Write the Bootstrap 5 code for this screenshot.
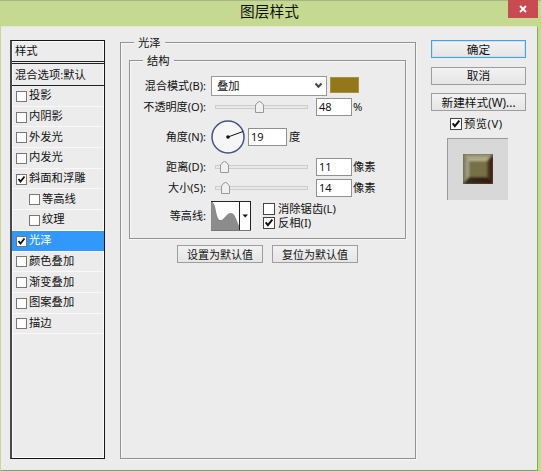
<!DOCTYPE html>
<html lang="zh-CN">
<head>
<meta charset="utf-8">
<title>图层样式</title>
<link href="https://cdn.jsdelivr.net/npm/bootstrap@5.3.0/dist/css/bootstrap.min.css" rel="stylesheet">
<style>
html,body{height:471px;overflow:hidden}
body{font:11.3px/14px "Noto Sans","Noto Sans CJK SC",sans-serif;color:#111;background:#c5d990;white-space:nowrap}
.dialog{width:541px;height:471px;border-top:1px solid #a5b58a}
.titlebar{height:25px;padding-right:2px;font-size:14.7px;line-height:21px}
.close-box{top:-1px;right:3px;width:30px;height:18px;background:#c84b51}
.content-area{width:537px;height:445px;margin-left:1px;padding:13px 0 0 9px;background:#ececec;border-top:1px solid #e1e9c8;border-right:1px solid #8fa653;border-bottom:1px solid #8b9a65}
.style-list{width:95px;height:419px;border:1px solid #161616;border-left:2px solid #484848;box-shadow:inset 1px 1px #fafafa,inset -1px -1px #fafafa;flex:none}
.list-head{height:21px;padding:3px 0 0 3px;border-bottom:1px solid #222}
.list-sub{height:23px;margin-top:1px;padding:4px 0 0 3px;border-top:1px solid #222;border-bottom:1px solid #222}
.style-row{height:20.7px;padding:0 0 1px 4px;border-bottom:1px solid #f9f9f9;gap:2px}
.style-row.child{padding-left:17px}
.style-row.active{background:#3298fb;color:#fff}
.style-row .tick{margin-top:2px}
.tick{width:11px;height:11px;border:1px solid #777;background:#fff;flex:none;display:block}
.tick.big{width:12px;height:12px;border-color:#444}
.tick svg{display:block;width:100%;height:100%}
.group{border:1px solid #929292;box-shadow:inset 1px 1px #f8f8f8,1px 1px #f6f6f6;position:relative}
.outer{width:296px;height:417px;margin:2px 0 0 15px;padding:17px 0 0 8px;flex:none}
.inner{width:277px;height:179px;padding-top:14px}
.group-title{position:absolute;top:-7px;left:13px;padding:0 4px;background:#ececec}
.field{display:flex;align-items:center}
.field-label{width:76px;text-align:right;margin-right:5px;flex:none;font-size:11.1px}
.combo{width:116px;height:20px;border:1px solid #999;background:#fff;padding:0 3px 0 5px}
.swatch{width:29px;height:16px;background:#937719;border:1px solid #a99045;margin:-2px 0 0 3px}
.slide{width:93px;height:12px;margin:0 8px 0 4px;flex:none}
.num{width:36px;height:18px;border:1px solid #919191;background:#fff;padding:1px 0 0 2px;margin-right:1px;font-size:11px;line-height:14px}
.num.wide{width:39px;margin-left:3px;margin-right:2px}
.contour{width:40px;height:30px}
.push{height:18px;border:1px solid #9e9e9e;background:linear-gradient(#f2f2f2,#e5e5e5);border-radius:0;padding:0;color:#111;font:inherit;line-height:15px}
.defaults .push{width:86px;font-size:11px}
.side{width:95px;margin-left:15px}
.side .push{width:95px;margin-bottom:8.5px;font-size:11.7px}
.side .push.main{border-color:#4b9fe0;box-shadow:inset 0 0 0 1px #c8e3f5}
.preview-check{margin-top:-3px;padding-left:19px;gap:2px;letter-spacing:.5px}
.preview-frame{width:61px;height:62px;margin:7px 0 0 16px;background:#d8d8d8;border-top:1px solid #9a9a9a;border-left:1px solid #9a9a9a}
</style>
<script src="https://cdn.jsdelivr.net/npm/bootstrap@5.3.0/dist/js/bootstrap.bundle.min.js"></script>
</head>
<body>
<div class="dialog">
  <div class="titlebar position-relative text-center">图层样式
    <div class="close-box position-absolute d-flex align-items-center justify-content-center"><svg width="8" height="8"><path d="M1 1L7 7M7 1L1 7" stroke="#fff" stroke-width="1.8"/></svg></div>
  </div>
  <div class="content-area d-flex align-items-start">
    <div class="style-list">
      <div class="list-head">样式</div>
      <div class="list-sub">混合选项:默认</div>
      <div class="style-row d-flex align-items-center"><i class="tick"></i>投影</div>
      <div class="style-row d-flex align-items-center"><i class="tick"></i>内阴影</div>
      <div class="style-row d-flex align-items-center"><i class="tick"></i>外发光</div>
      <div class="style-row d-flex align-items-center"><i class="tick"></i>内发光</div>
      <div class="style-row d-flex align-items-center"><i class="tick"><svg viewBox="0 0 9 9"><path d="M1.5 4L3.5 6.5L7.5 1.5" fill="none" stroke="#111" stroke-width="1.8"/></svg></i>斜面和浮雕</div>
      <div class="style-row child d-flex align-items-center"><i class="tick"></i>等高线</div>
      <div class="style-row child d-flex align-items-center"><i class="tick"></i>纹理</div>
      <div class="style-row active d-flex align-items-center"><i class="tick"><svg viewBox="0 0 9 9"><path d="M1.5 4L3.5 6.5L7.5 1.5" fill="none" stroke="#111" stroke-width="1.8"/></svg></i>光泽</div>
      <div class="style-row d-flex align-items-center"><i class="tick"></i>颜色叠加</div>
      <div class="style-row d-flex align-items-center"><i class="tick"></i>渐变叠加</div>
      <div class="style-row d-flex align-items-center"><i class="tick"></i>图案叠加</div>
      <div class="style-row d-flex align-items-center"><i class="tick"></i>描边</div>
    </div>

    <div class="group outer">
      <span class="group-title">光泽</span>
      <div class="group inner">
        <span class="group-title">结构</span>
        <div class="field" style="height:21px">
          <span class="field-label">混合模式(B):</span>
          <div class="combo d-flex align-items-center justify-content-between">叠加<svg width="9" height="7"><path d="M1.5 1.5L4.5 4.7L7.5 1.5" fill="none" stroke="#444" stroke-width="2"/></svg></div>
          <div class="swatch"></div>
        </div>
        <div class="field" style="height:21px">
          <span class="field-label">不透明度(O):</span>
          <svg class="slide" viewBox="0 0 93 12"><rect x=".5" y="4.5" width="92" height="3" fill="#e8e8e8" stroke="#cdcdcd"/><path d="M40.500 11.500V4L43 1Q44.500 0 46 1L48.500 4V11.500Z" fill="#f0f0f0" stroke="#999"/></svg>
          <div class="num">48</div><span>%</span>
        </div>
        <div class="field" style="height:39px">
          <span class="field-label">角度(N):</span>
          <svg width="34" height="34"><circle cx="17" cy="17" r="16" fill="#f6f6f6" stroke="#435381" stroke-width="1.5"/><path d="M17 17L32 11.500" stroke="#111"/><circle cx="17" cy="17" r="1.8" fill="#111"/></svg>
          <div class="num wide">19</div><span>度</span>
        </div>
        <div class="field" style="height:21px">
          <span class="field-label">距离(D):</span>
          <svg class="slide" viewBox="0 0 93 12"><rect x=".5" y="4.5" width="92" height="3" fill="#e8e8e8" stroke="#cdcdcd"/><path d="M5.500 11.500V4L8 1Q9.500 0 11 1L13.500 4V11.500Z" fill="#f0f0f0" stroke="#999"/></svg>
          <div class="num">11</div><span>像素</span>
        </div>
        <div class="field" style="height:22px">
          <span class="field-label">大小(S):</span>
          <svg class="slide" viewBox="0 0 93 12"><rect x=".5" y="4.5" width="92" height="3" fill="#e8e8e8" stroke="#cdcdcd"/><path d="M6.500 11.500V4L9 1Q10.500 0 12 1L14.500 4V11.500Z" fill="#f0f0f0" stroke="#999"/></svg>
          <div class="num">14</div><span>像素</span>
        </div>
        <div class="field" style="height:33px">
          <span class="field-label">等高线:</span>
          <svg class="contour" viewBox="0 0 40 30"><rect x="1" y="1" width="38" height="28" fill="#fff"/><path d="M2 29V2C5 3 5 18 9 19C13 20 15 12 20 12C25 12 26 23 29 26V29Z" fill="#8c8c8c"/><path d="M1 0V30M0 .5H40M28.500 0V30M39.500 0V30" fill="none" stroke="#222"/><path d="M0 29.500H40" stroke="#777"/><path d="M31.500 13.500H37L34.200 16.500Z" fill="#111"/></svg>
          <div class="d-flex flex-column ms-2 ps-1">
            <div class="d-flex align-items-center" style="height:14px;gap:3px"><i class="tick big"></i>消除锯齿(L)</div>
            <div class="d-flex align-items-center" style="height:14px;gap:3px"><i class="tick big"><svg viewBox="0 0 9 9"><path d="M1.500 4L3.500 6.500L7.500 1.500" fill="none" stroke="#111" stroke-width="1.8"/></svg></i>反相(I)</div>
          </div>
        </div>
      </div>
      <div class="defaults d-flex" style="padding:6px 0 0 48px;gap:9px">
        <button class="push">设置为默认值</button><button class="push">复位为默认值</button>
      </div>
    </div>

    <div class="side">
      <button class="push main d-block">确定</button>
      <button class="push d-block">取消</button>
      <button class="push d-block">新建样式(W)...</button>
      <div class="preview-check d-flex align-items-center"><i class="tick big"><svg viewBox="0 0 9 9"><path d="M1.500 4L3.500 6.500L7.500 1.500" fill="none" stroke="#111" stroke-width="1.8"/></svg></i>预览(V)</div>
      <div class="preview-frame d-flex align-items-center justify-content-center">
        <svg width="30" height="30"><defs><linearGradient id="top" x2="0" y2="1"><stop stop-color="#8e8a6d"/><stop offset="1" stop-color="#bdb997"/></linearGradient><linearGradient id="left"><stop stop-color="#737158"/><stop offset="1" stop-color="#b2b093"/></linearGradient><linearGradient id="right"><stop stop-color="#53452a"/><stop offset="1" stop-color="#35130b"/></linearGradient><linearGradient id="bottom"><stop stop-color="#31311f"/><stop offset="1" stop-color="#3a150d"/></linearGradient><filter id="soft" x="0" y="0" width="1" height="1"><feGaussianBlur stdDeviation=".8"/></filter></defs><path d="M0 0H30V30H0Z" fill="#6b6547"/><g filter="url(#soft)"><path d="M0 0H30L24 7H6Z" fill="url(#top)"/><path d="M0 0L6 7V23L0 30Z" fill="url(#left)"/><path d="M30 0V30L24 23V7Z" fill="url(#right)"/><path d="M0 30L6 23H24L30 30Z" fill="url(#bottom)"/><path d="M6 7H24V23H6Z" fill="#777047"/></g></svg>
      </div>
    </div>
  </div>
</div>
</body>
</html>
